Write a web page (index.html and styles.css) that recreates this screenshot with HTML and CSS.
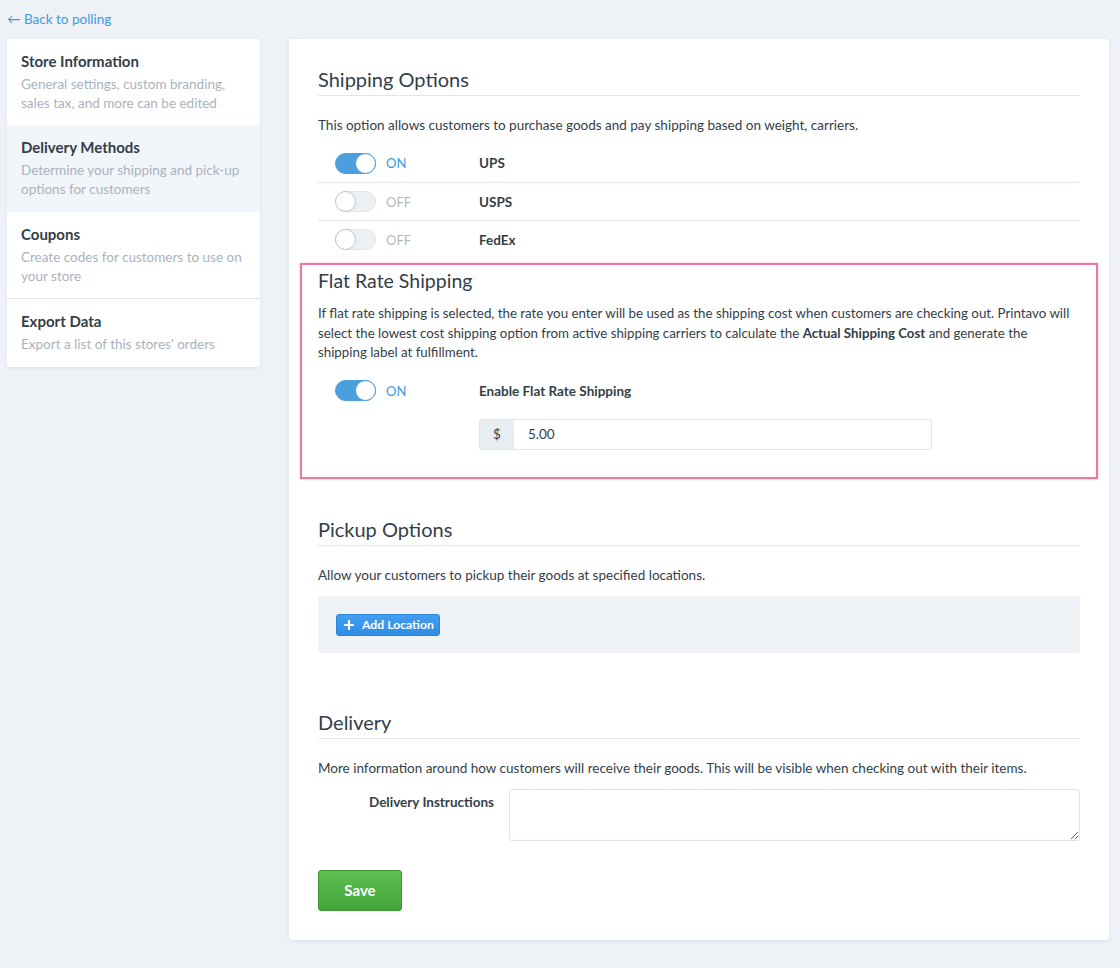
FILE: index.html
```html
<!DOCTYPE html>
<html>
<head>
<meta charset="utf-8">
<link rel="stylesheet" href="styles.css">
</head>
<body>
<div class="page">
  <a class="back" href="#">&larr; Back to polling</a>
  <div class="layout">
    <nav class="side">
      <div class="side-item">
        <div class="side-title">Store Information</div>
        <div class="side-desc">General settings, custom branding, sales tax, and more can be edited</div>
      </div>
      <div class="side-item active">
        <div class="side-title">Delivery Methods</div>
        <div class="side-desc">Determine your shipping and pick-up options for customers</div>
      </div>
      <div class="side-item bordered">
        <div class="side-title">Coupons</div>
        <div class="side-desc">Create codes for customers to use on your store</div>
      </div>
      <div class="side-item">
        <div class="side-title">Export Data</div>
        <div class="side-desc">Export a list of this stores' orders</div>
      </div>
    </nav>
    <main class="main">
      <section class="sec">
        <h2 class="sec-title">Shipping Options</h2>
        <p class="sec-text">This option allows customers to purchase goods and pay shipping based on weight, carriers.</p>
        <div class="carriers">
          <div class="carrier">
            <div class="tog-wrap"><span class="toggle on"><span class="knob"></span></span><span class="tog-label on">ON</span></div>
            <span class="carrier-name">UPS</span>
          </div>
          <div class="carrier">
            <div class="tog-wrap"><span class="toggle"><span class="knob"></span></span><span class="tog-label">OFF</span></div>
            <span class="carrier-name">USPS</span>
          </div>
          <div class="carrier">
            <div class="tog-wrap"><span class="toggle"><span class="knob"></span></span><span class="tog-label">OFF</span></div>
            <span class="carrier-name">FedEx</span>
          </div>
        </div>
      </section>

      <section class="flat">
        <h2 class="flat-title">Flat Rate Shipping</h2>
        <p class="flat-text">If flat rate shipping is selected, the rate you enter will be used as the shipping cost when customers are checking out. Printavo will select the lowest cost shipping option from active shipping carriers to calculate the <b>Actual Shipping Cost</b> and generate the shipping label at fulfillment.</p>
        <div class="carrier flat-row">
          <div class="tog-wrap"><span class="toggle on"><span class="knob"></span></span><span class="tog-label on">ON</span></div>
          <span class="carrier-name">Enable Flat Rate Shipping</span>
        </div>
        <div class="input-group">
          <span class="addon">$</span>
          <span class="input-val">5.00</span>
        </div>
      </section>

      <section class="sec pickup">
        <h2 class="sec-title">Pickup Options</h2>
        <p class="sec-text">Allow your customers to pickup their goods at specified locations.</p>
        <div class="well">
          <button class="btn-blue"><svg width="10" height="10" viewBox="0 0 10 10"><path d="M5 1v8M1 5h8" stroke="#fff" stroke-width="2.2" stroke-linecap="round"/></svg>Add Location</button>
        </div>
      </section>

      <section class="sec delivery">
        <h2 class="sec-title">Delivery</h2>
        <p class="sec-text">More information around how customers will receive their goods. This will be visible when checking out with their items.</p>
        <div class="field">
          <label class="field-label">Delivery Instructions</label>
          <textarea class="textarea"></textarea>
        </div>
      </section>

      <button class="btn-save">Save</button>
    </main>
  </div>
</div>
</body>
</html>
```
FILE: styles.css
```css
* { box-sizing: border-box; }
html, body { margin: 0; padding: 0; }
body {
  background: #eef2f7;
  font-family: Lato, "Open Sans", "Liberation Sans", sans-serif;
  color: #333e48;
  font-size: 13.5px;
  height: 968px;
  overflow: hidden;
}
.page { padding: 10px 10px 0 7px; }
.back {
  display: block;
  color: #3c9ae0;
  text-decoration: none;
  font-size: 13.5px;
  line-height: 18px;
  height: 29px;
}
.layout { display: flex; align-items: flex-start; gap: 29px; }
.side {
  width: 253px;
  flex: none;
  background: #fff;
  border-radius: 3px;
  box-shadow: 0 1px 3px rgba(100,120,150,0.12);
  overflow: hidden;
}
.side-item { padding: 12px 14px 11px; height: 87px; }
.side-item:first-child { height: 86px; }
.side-item:last-child { height: 68px; }
.side-item.active { background: #f2f5f9; }
.side-item.bordered { border-bottom: 1px solid #e1e6ec; }
.side-title { font-weight: 700; font-size: 15px; line-height: 20px; margin-bottom: 4px; color: #333e48; }
.side-desc { color: #a9b3bd; font-size: 13.5px; line-height: 19px; }

.main {
  width: 820px;
  flex: none;
  background: #fff;
  border-radius: 3px;
  box-shadow: 0 1px 4px rgba(100,120,150,0.14);
  padding: 27px 29px 29px;
  height: 901px;
}
.sec-title {
  font-weight: 400;
  font-size: 20px;
  line-height: 26px;
  margin: 0;
  padding-bottom: 3px;
  border-bottom: 1px solid #e1e6ec;
  color: #333e48;
}
.sec-text { margin: 20px 0 0; line-height: 19px; }
.carriers { margin-top: 9px; }
.carrier { display: flex; align-items: center; height: 38px; }
.carriers .carrier + .carrier { border-top: 1px solid #e1e6ec; }
.tog-wrap { display: flex; align-items: center; width: 161px; padding-left: 17px; }
.toggle {
  width: 41px; height: 21px;
  border-radius: 11px;
  background: #edf1f6;
  border: 1px solid #dfe5ec;
  position: relative;
  flex: none;
}
.toggle .knob {
  position: absolute; top: -1px; left: -1px;
  width: 21px; height: 21px; border-radius: 50%;
  background: #fff;
  border: 1.5px solid #b9c3cd;
}
.toggle.on { background: #4a9fdc; border-color: #4a9fdc; }
.toggle.on .knob { left: auto; right: -1px; border-color: #4a9fdc; }
.tog-label { margin-left: 10px; color: #b1bac4; font-size: 13px; }
.tog-label.on { color: #3c9ae0; }
.carrier-name { font-weight: 700; color: #333e48; }

.flat {
  margin: 5px -18px 0 -18px;
  border: 2px solid #f2759b;
  padding: 3px 16px 27px 16px;
  box-shadow: 0 0 2px rgba(242,117,155,0.5);
}
.flat-title { font-weight: 400; font-size: 19.5px; line-height: 26px; margin: 0; color: #333e48; }
.flat-text { margin: 10px 0 0; line-height: 19.5px; font-size: 13.3px; max-width: 757px; }
.flat-row { margin-top: 8px; height: 40px; }
.input-group {
  display: flex;
  margin-left: 161px;
  width: 453px;
  height: 31px;
  border: 1px solid #dfe5ec;
  border-radius: 3px;
  overflow: hidden;
  margin-top: 8px;
}
.addon {
  width: 34px; background: #e8edf2;
  display: flex; align-items: center; justify-content: center;
  font-size: 13.5px;
}
.input-val { padding-left: 14px; display: flex; align-items: center; }

.pickup { margin-top: 37px; }
.well {
  margin-top: 11px;
  background: #eff2f7;
  border-radius: 3px;
  height: 57px;
  padding: 18px;
}
.btn-blue {
  display: inline-flex; align-items: center; gap: 8px;
  height: 22px;
  padding: 0 5px 0 7px;
  background: linear-gradient(#449ef0, #2f8de4);
  border: 1px solid #2a84d6;
  border-radius: 3px;
  color: #fff;
  font-family: inherit;
  font-weight: 700;
  font-size: 12.2px;
}
.delivery { margin-top: 56px; }
.field { display: flex; margin-top: 11px; }
.field-label {
  width: 191px; text-align: right; font-weight: 700; font-size: 13.5px;
  padding-top: 5px; padding-right: 15px;
}
.textarea {
  flex: 1; height: 52px; border: 1px solid #dde3ea; border-radius: 3px; resize: vertical;
  font-family: inherit;
}
.btn-save {
  margin-top: 29px;
  width: 84px; height: 41px;
  background: linear-gradient(#5dbf51, #44a33a);
  border: 1px solid #3f9a36;
  border-radius: 3px;
  color: #fff;
  font-family: inherit;
  font-weight: 700;
  font-size: 15px;
}
```
